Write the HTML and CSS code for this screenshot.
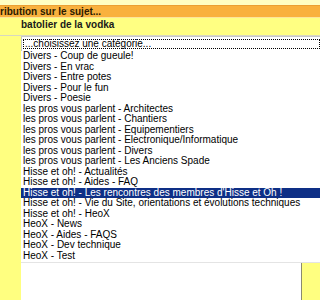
FILE: index.html
```html
<!DOCTYPE html>
<html>
<head>
<meta charset="utf-8">
<link rel="stylesheet" href="styles.css">
</head>
<body>
<div class="top"></div>
<div class="bar">ribution sur le sujet...</div>
<div class="band"><span class="pseudo">batolier de la vodka</span></div>
<div class="main">
  <div class="side"></div>
  <div class="content"></div>
</div>
<div class="dropdown">
  <div class="sel"><span class="focus">...choisissez une catégorie...</span></div>
  <ul class="list">
    <li>Divers - Coup de gueule!</li>
    <li>Divers - En vrac</li>
    <li>Divers - Entre potes</li>
    <li>Divers - Pour le fun</li>
    <li>Divers - Poesie</li>
    <li>les pros vous parlent - Architectes</li>
    <li>les pros vous parlent - Chantiers</li>
    <li>les pros vous parlent - Equipementiers</li>
    <li>les pros vous parlent - Electronique/Informatique</li>
    <li>les pros vous parlent - Divers</li>
    <li>les pros vous parlent - Les Anciens Spade</li>
    <li>Hisse et oh! - Actualités</li>
    <li>Hisse et oh! - Aides - FAQ</li>
    <li class="on">Hisse et oh! - Les rencontres des membres d'Hisse et Oh !</li>
    <li>Hisse et oh! - Vie du Site, orientations et évolutions techniques</li>
    <li>Hisse et oh! - HeoX</li>
    <li>HeoX - News</li>
    <li>HeoX - Aides - FAQS</li>
    <li>HeoX - Dev technique</li>
    <li>HeoX - Test</li>
  </ul>
</div>
</body>
</html>
```
FILE: styles.css
```css
html, body {
  margin: 0;
  padding: 0;
}
body {
  width: 320px;
  height: 300px;
  overflow: hidden;
  background: #ffff80;
  font-family: "Liberation Sans", Arial, sans-serif;
  position: relative;
}
.top {
  height: 5px;
  background: #ffffc4;
}
.bar {
  height: 12px;
  background: #f9b13e;
  border-top: 1px solid #eba035;
  box-sizing: border-box;
  font-weight: bold;
  font-size: 10px;
  line-height: 11px;
  color: #2a1a00;
  white-space: nowrap;
}
.band {
  height: 18px;
  background: #ffff82;
  border-top: 1px solid #fde49a;
  box-sizing: border-box;
  font-weight: bold;
  font-size: 10px;
  line-height: 14px;
  color: #1a1a1a;
  padding-left: 21px;
}
.main {
  display: flex;
  height: 265px;
  border-top: 1px solid #d8d8c0;
}
.side {
  width: 21px;
  background: #ffff80;
}
.content {
  width: 280px;
  background: #ffffff;
  border-right: 1px solid #8a8a70;
}
.dropdown {
  position: absolute;
  left: 21px;
  top: 36px;
  right: 0;
  background: #fff;
  border-bottom: 1px solid #e4e4e4;
  font-size: 10px;
  color: #000;
}
.sel {
  height: 15px;
  box-sizing: border-box;
  border-top: 1px solid #c8c8c8;
  border-left: 1px solid #c8c8c8;
  padding: 2px 0 0 1px;
}
.focus {
  display: block;
  border: 1px dotted #000;
  line-height: 8px;
  height: 8px;
  padding-left: 1px;
  white-space: nowrap;
}
.list {
  list-style: none;
  margin: 0;
  padding: 0 0 1px 0;
}
.list li {
  height: 10.5px;
  line-height: 10.5px;
  padding-left: 2px;
  white-space: nowrap;
}
.list li.on {
  background: #0e2f86;
  color: #fff;
}
```
